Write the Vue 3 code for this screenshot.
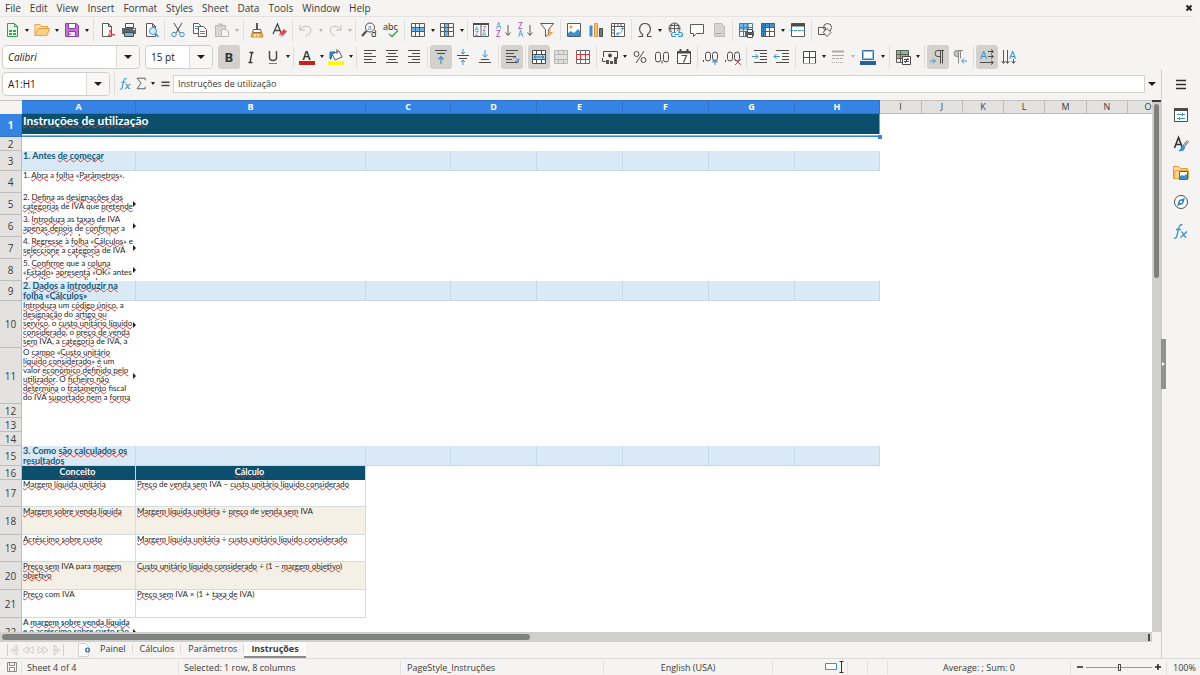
<script setup>
import { ref } from 'vue'

const menus = ['File', 'Edit', 'View', 'Insert', 'Format', 'Styles', 'Sheet', 'Data', 'Tools', 'Window', 'Help']

const page = '<path d="M3.5 1.5h6l3 3v10h-9z" fill="#fff" stroke="#5a5a58"/><path d="M9.5 1.5v3h3" fill="none" stroke="#5a5a58"/>'
const lines = (a) => a.map(([x, y, w]) => `<path d="M${x} ${y}.5h${w}" stroke="#4b4b49"/>`).join('')
const grid = (c) => `<path d="M1.5 1.5h13v13h-13zM1.5 5.5h13M1.5 9.5h13M5.5 1.5v13M9.5 1.5v13" fill="none" stroke="${c}"/>`
const letter = (x, y, s, c, t, extra = '') => `<text x="${x}" y="${y}" font-size="${s}" fill="${c}" font-family="Noto Sans, sans-serif" ${extra}>${t}</text>`
const down = '<path d="M13 3v10M10.500 10.500l2.500 3l2.500-3" fill="none" stroke="#5a5a58"/>'

const icons = {
  new: '<path d="M3.500 1.500h7l3 3v10h-10z" fill="#e9f6ec" stroke="#2f9e4e"/><path d="M10.500 1.500v3h3" fill="none" stroke="#2f9e4e"/><path d="M5 8h7v5h-7z" fill="#3aa757"/><path d="M5 10.500h7M8.500 8v5" stroke="#e9f6ec"/>',
  open: '<path d="M1 13.500v-11h5l1.500 2h6v3" fill="#fbe0ae" stroke="#e8a33d"/><path d="M1 13.500l3-7h11.500l-2.500 7z" fill="#fdd189" stroke="#e8a33d"/>',
  save: '<path d="M1.500 1.500h11l2 2v11h-13z" fill="#c073d0" stroke="#91419f"/><path d="M4.500 1.500h7v5h-7z" fill="#fff" stroke="#91419f"/><path d="M4.500 9.500h7v5h-7z" fill="#f6e8f9" stroke="#91419f"/><path d="M6 11v2" stroke="#91419f"/>',
  pdf: page + '<path d="M8 15c3-3 4-5 3-7c-1 2 2 5 5 5c-3-1-6 0-8 2" fill="none" stroke="#d9364c"/>',
  print: '<path d="M4.500 1.500h8v4h-8z" fill="#fff" stroke="#4b4b49"/><path d="M1 6h14v6h-14z" fill="#5e6467"/><path d="M3.500 10.500h9v4h-9z" fill="#6fb6e8" stroke="#4b4b49"/><path d="M12 7.500h2" stroke="#fff"/>',
  preview: page + '<circle cx="10" cy="9" r="3.500" fill="#d7ecfa" stroke="#3c92d0"/><path d="M12.500 11.500l3 3.500" stroke="#3c92d0" stroke-width="1.500"/>',
  cut: '<path d="M4 1l6 10M12 1l-6 10" stroke="#4b4b49" fill="none"/><circle cx="4" cy="12.500" r="2.200" fill="none" stroke="#3c92d0"/><circle cx="12" cy="12.500" r="2.200" fill="none" stroke="#3c92d0"/>',
  copy: '<path d="M1.500 1.500h5l3 3v7h-8z" fill="#fff" stroke="#5a5a58"/><path d="M6.500 4.500h5l3 3v7h-8z" fill="#fff" stroke="#5a5a58"/><path d="M3 4.500h3M3 6.500h3M8 9.500h5M8 11.500h5" stroke="#3c92d0"/>',
  paste: '<path d="M1.500 3.500h10v11h-10z" fill="#d8d8d6" stroke="#b8b8b6"/><path d="M4 1.500h5v3h-5z" fill="#c4c4c2"/><path d="M7.500 7.500h4l3 2v5h-7z" fill="#f5f5f4" stroke="#b8b8b6"/>',
  brush: '<path d="M8 1v6" stroke="#5a5a58" stroke-width="2"/><path d="M4.500 7.500h7l1 3h-9z" fill="#fff" stroke="#5a5a58"/><path d="M3 11h10l1 4h-12z" fill="#f2b255" stroke="#d88a1e"/><path d="M6 12v3M9 12v3" stroke="#fff"/>',
  clear: '<path d="M2 12l4.500-10l4 10M3.500 8.500h6" fill="none" stroke="#4b4b49" stroke-width="1.300"/><path d="M8 12l5-5l3 2.500l-5 5z" fill="#e64553"/><path d="M8 12l3 2.500" stroke="#f6a9b0" stroke-width="2"/>',
  undo: '<path d="M2 8c3-5 10-5 11 0c0 3-3 5-5 6M2 3v5h5" fill="none" stroke="#bdbdbb"/>',
  redo: '<path d="M14 8c-3-5-10-5-11 0c0 3 3 5 5 6M14 3v5h-5" fill="none" stroke="#bdbdbb"/>',
  find: '<circle cx="9" cy="5.500" r="4.500" fill="#fff" stroke="#4b4b49"/><path d="M5.500 9l-4.500 5" stroke="#4b4b49" stroke-width="2"/>' + letter(6.5, 8, 7.5, '#3c92d0', 'a') + letter(10, 15, 9, '#333', 'd'),
  spell: letter(0, 8, 9, '#333', 'abc') + '<path d="M6 12l3 2.500l6-6" fill="none" stroke="#3aa757" stroke-width="1.500"/>',
  row: '<path d="M1 5h14v4h-14z" fill="#6db5ea"/>' + grid('#5a5a58'),
  col: '<path d="M5 1h5v13h-5z" fill="#6db5ea"/>' + grid('#5a5a58'),
  sort: '<path d="M.500 1.500h15v13h-15zM8 1.500v13" fill="#fff" stroke="#5a5a58"/><path d="M0 2h16" stroke="#4b4b49" stroke-width="2"/>' + letter(1.5, 8.5, 6.5, '#3c92d0', 'A') + letter(9.5, 8.5, 6.5, '#a347ba', 'Z') + letter(2, 14, 6.5, '#a347ba', 'Z') + letter(9, 14, 6.5, '#3c92d0', 'A'),
  az: letter(1, 7, 8, '#3c92d0', 'A') + letter(1, 15, 8, '#a347ba', 'Z') + down,
  za: letter(1, 7, 8, '#a347ba', 'Z') + letter(1, 15, 8, '#3c92d0', 'A') + down,
  filter: '<path d="M1.500 1.500h13l-5 6v5l-3 2v-7z" fill="#fff" stroke="#5a5a58"/><path d="M12 6l-4 5h3l-2 5l5-6h-3z" fill="#f39a37"/>',
  image: '<path d="M1.500 1.500h13v13h-13z" fill="#fff" stroke="#5a5a58"/><path d="M2 14v-3l3-2l3 2l4-4l2.500 3v4z" fill="#3c92d0"/><circle cx="5" cy="5" r="1.500" fill="#f39a37"/>',
  chart: '<path d="M1.500 3.500h3v11h-3z" fill="#3c92d0"/><path d="M6.500 1.500h3v13h-3z" fill="#f8c078" stroke="#e8952f"/><path d="M11.500 6.500h3v8h-3z" fill="#777" stroke="#4b4b49"/>',
  pivot: '<path d="M1.500 1.500h13v13h-13z" fill="#fff" stroke="#5a5a58"/><path d="M1.500 4.500h13M4.500 1.500v13M8 1.500v3M11 1.500v3M1.500 8h3M1.500 11h3" stroke="#5a5a58"/><path d="M6.500 12c4 0 6-2 6-6M10.500 7.500l2-2l2 2M8.500 10l-2 2l2 2" fill="none" stroke="#3c92d0"/>',
  omega: '<path d="M1.500 14.500h4v-2c-5-4-3-11 2.500-11s7.500 7 2.500 11v2h4" fill="none" stroke="#4b4b49" stroke-width="1.200"/>',
  link: '<circle cx="7.500" cy="6.500" r="5.500" fill="none" stroke="#5a5a58"/><path d="M2 6.500h11M3 3.500h9M7.500 1v11M5 2c-2 3-2 6 0 9M10 2c2 3 2 5 0 7" fill="none" stroke="#5a5a58"/><path d="M4 10h12v6h-12z" fill="#f5f5f4"/><path d="M9 10.500h-2.500a2 2 0 0 0 0 4h2.500M11 10.500h2.500a2 2 0 0 1 0 4h-2.500M7.500 12.500h5" fill="none" stroke="#3c92d0" stroke-width="1.200"/>',
  comment: '<path d="M1.500 2.500h13v9h-7l-3 3v-3h-3z" fill="#fff" stroke="#5a5a58"/>',
  footer: '<path d="M3.500 1.500h7l3 3v10h-10z" fill="#d5d5d3" stroke="#bbbbb9"/><path d="M5 11.500h6" stroke="#aaa"/>',
  printarea: '<path d="M2 1h9v7h-9z" fill="#6db5ea"/>' + grid('#5a7890') + '<path d="M7 9h9v5h-9z" fill="#5e6467"/><path d="M9.500 7.500h5v3h-5zM9.500 12.500h5v3h-5z" fill="#fff" stroke="#4b4b49"/>',
  freeze: '<path d="M1 1h14v14h-14z" fill="#fff"/><path d="M1 1h14v4h-14zM1 1h4v14h-4z" fill="#3c92d0"/>' + grid('#5a5a58') + '<path d="M1 3h5M3.500 1v14" stroke="#1f6cab"/>',
  split: '<path d="M1.500 1.500h13v13h-13z" fill="#fff" stroke="#5a5a58"/><path d="M1 3h14" stroke="#4b4b49" stroke-width="3"/><path d="M0 8.500h16" stroke="#3c92d0" stroke-dasharray="3 1"/>',
  shapes: '<path d="M1.500 5.500h7v7h-7z" fill="#f5f5f4" stroke="#5a5a58"/><circle cx="10.500" cy="5.500" r="4" fill="none" stroke="#5a5a58"/><path d="M10 6.500l4 4l-4 4l-4-4z" fill="#f5f5f4" stroke="#5a5a58"/>',
  bold: letter(3.5, 13, 13, '#333', 'B', 'font-weight="700"'),
  italic: '<path d="M6.500 3.500h4M5.500 13.500h4M9 3.500l-2 10" fill="none" stroke="#333" stroke-width="1.300"/>',
  underline: '<path d="M4.500 2v6.500c0 4 7 4 7 0v-6.500" fill="none" stroke="#4b4b49" stroke-width="1.500"/><path d="M4 14.500h8" stroke="#3c92d0"/>',
  color: letter(3.5, 11, 12, '#333', 'A', 'font-weight="600"') + '<path d="M0 12h16v4h-16z" fill="#c9211e"/>',
  fill: '<path d="M4 5l7-3l3 6l-7 3z" fill="#fff" stroke="#5a5a58"/><path d="M9 0v5" stroke="#5a5a58"/><path d="M2 3h5l-3 2l-1 5h-1z" fill="#3c92d0" stroke="#2a6da8"/><path d="M0 12h16v4h-16z" fill="#ff0"/>',
  left: lines([[2, 1, 12], [2, 4, 8], [2, 7, 12], [2, 10, 8], [2, 13, 12]]),
  center: lines([[2, 1, 12], [4, 4, 8], [2, 7, 12], [4, 10, 8], [2, 13, 12]]),
  right: lines([[2, 1, 12], [6, 4, 8], [2, 7, 12], [6, 10, 8], [2, 13, 12]]),
  top: lines([[2, 1, 12], [4, 4, 8]]) + '<path d="M8 15v-7M5.500 10.500l2.500-3l2.500 3" fill="none" stroke="#3c92d0" stroke-width="1.200"/>',
  middle: lines([[2, 6, 12], [4, 9, 8]]) + '<path d="M8 0v5M6 3l2 2l2-2M8 16v-5M6 13l2-2l2 2" fill="none" stroke="#3c92d0"/>',
  bottom: lines([[4, 10, 8], [2, 13, 12]]) + '<path d="M8 1v7M5.500 5.500l2.500 3l2.500-3" fill="none" stroke="#3c92d0"/>',
  wrap: lines([[2, 1, 12], [2, 4, 8], [2, 7, 10], [2, 10, 6], [2, 13, 12]]) + '<path d="M9 9c3-1 4 0 5 4M11 11.500l3 2l1-4" fill="none" stroke="#3c92d0"/>',
  merge: '<path d="M1.500 1.500h13v13h-13zM1.500 5.500h13M1.500 10.500h13M5.500 1.500v4M10.500 1.500v4M5.500 10.500v4M10.500 10.500v4" fill="#fff" stroke="#4b4b49"/><path d="M2 6h12v4h-12z" fill="#a8d3f2"/><path d="M3 8h10M5 6.500l-2 1.500l2 1.500M11 6.500l2 1.500l-2 1.500" fill="none" stroke="#2a7ab8"/>',
  mergec: '<path d="M1.500 1.500h13v13h-13zM1.500 5.500h13M1.500 10.500h13M5.500 1.500v4M10.500 1.500v4M5.500 10.500v4M10.500 10.500v4" fill="#e0e0de" stroke="#b5b5b3"/>',
  unmerge: '<path d="M1.500 1.500h13v13h-13zM1.500 5.500h13M1.500 10.500h13M5.500 1.500v4M10.500 1.500v4M5.500 10.500v4M10.500 10.500v4" fill="#fff" stroke="#6a6a68"/><path d="M1.500 5.500h13v5h-13zM5.500 5.500v5M10.500 5.500v5" fill="#fee" stroke="#d9363e"/>',
  currency: '<path d="M1.500 8v-5.500h14v7" fill="none" stroke="#4b4b49"/><path d="M.500 9v3.500h3" fill="none" stroke="#4b4b49"/><circle cx="8" cy="6.500" r="2" fill="#4b4b49"/><path d="M4 11h3v4h-3zM8 12h3v3h-3zM12 8h3v7h-3z" fill="#555"/>',
  percent: '<circle cx="4.500" cy="5" r="2.500" fill="none" stroke="#4b4b49"/><circle cx="11.500" cy="11" r="2.500" fill="none" stroke="#4b4b49"/><path d="M12 2l-8 12" stroke="#4b4b49"/>',
  number: '<rect x="1.500" y="3" width="5" height="10" rx="2.500" fill="none" stroke="#4b4b49"/><rect x="9.500" y="3" width="5" height="10" rx="2.500" fill="none" stroke="#4b4b49"/><path d="M8 11.500v3" stroke="#4b4b49"/>',
  date: '<path d="M1.500 2.500h13v12h-13z" fill="#fff" stroke="#4b4b49"/><path d="M1 3.500h14M4.500 0v3M11.500 0v3" stroke="#4b4b49" stroke-width="2"/><path d="M5.500 6.500h5l-3 7" fill="none" stroke="#4b4b49" stroke-width="1.200"/>',
  addd: '<rect x="2.500" y="3" width="5" height="9" rx="2.500" fill="none" stroke="#4b4b49"/><rect x="9.500" y="3" width="5" height="9" rx="2.500" fill="none" stroke="#4b4b49"/><path d="M.500 11v2" stroke="#4b4b49"/><path d="M9 13h6M12 10v6" stroke="#3c92d0"/>',
  deld: '<rect x="2.500" y="3" width="5" height="9" rx="2.500" fill="none" stroke="#4b4b49"/><rect x="9.500" y="3" width="5" height="9" rx="2.500" fill="none" stroke="#4b4b49"/><path d="M.500 11v2" stroke="#4b4b49"/><path d="M10 10l6 6M16 10l-6 6" stroke="#e64553"/>',
  indent: lines([[2, 1, 13], [8, 4, 7], [8, 7, 7], [8, 10, 7], [2, 13, 13]]) + '<path d="M0 7.500h6M3.500 5l2.500 2.500l-2.500 2.500" fill="none" stroke="#3c92d0"/>',
  outdent: lines([[2, 1, 13], [8, 4, 7], [8, 7, 7], [8, 10, 7], [2, 13, 13]]) + '<path d="M6 7.500h-6M2.500 5l-2.500 2.500l2.500 2.500" fill="none" stroke="#3c92d0"/>',
  borders: '<path d="M2.500 2.500h12v12h-12zM8.500 2.500v12M2.500 8.500h12" fill="#fff" stroke="#4b4b49"/><path d="M2 14.500h13" stroke="#e8a33d"/>',
  bstyle: '<path d="M2 2.500h12" stroke="#aaa" stroke-width="2"/><path d="M2 6.500h12" stroke="#aaa"/><path d="M2 9.500h12" stroke="#aaa" stroke-dasharray="3 1"/><path d="M2 13.500h12" stroke="#aaa" stroke-dasharray="1 1"/>',
  bcolor: '<path d="M2.500 1.500h11v9h-11z" fill="#fff" stroke="#3c6c9c"/><path d="M3.500 2.500h9v7h-9z" fill="none" stroke="#8ec3ec"/><path d="M0 12h16v4h-16z" fill="#2a6099"/>',
  cond: '<path d="M1 1h12v4h-12z" fill="#7cc68d"/><path d="M1 5h12v4h-12z" fill="#ef8a80"/><path d="M1.500 1.500h12v12h-12zM1.500 5.500h12M1.500 9.500h12M5.500 1.500v12" fill="none" stroke="#5a5a58"/><path d="M7.500 7.500h8v8h-8z" fill="#fff" stroke="#4b4b49"/><path d="M9 10.500h5M9 12.500h5M13 9l-3 5" stroke="#4b4b49"/>',
  ltr: '<path d="M14 1.500h-6a3 3 0 0 0 0 6h2M10.500 1.500v13M12.500 1.500v13" fill="none" stroke="#4b4b49"/><path d="M0 12h5M3 9.500l2.500 2.500l-2.500 2.500" fill="none" stroke="#3c92d0"/>',
  rtl: '<path d="M8 1.500h-3a3 3 0 0 0 0 6h1" fill="#c4c4c2" stroke="#8a8a88"/><path d="M6.500 1.500v13M8.500 1.500v8M6 1.500h5" fill="none" stroke="#8a8a88"/><path d="M15 12h-5M12 9.500l-2.500 2.500l2.500 2.500" fill="none" stroke="#3c92d0"/>',
  horiz: letter(1, 10, 11, '#3c92d0', 'A') + '<path d="M9 2.500h5M12 .500l2.500 2l-2.500 2M9 7.500h5M12 5.500l2.500 2l-2.500 2M1 13.500h13M12 11.500l2.500 2l-2.500 2" fill="none" stroke="#4b4b49"/>',
  vert: letter(8, 10, 11, '#3c92d0', 'A') + '<path d="M2.500 1v13M.500 12l2 2.500l2-2.500M6.500 1v13M4.500 12l2 2.500l2-2.500M12.500 10v4M10.500 12l2 2.500l2-2.500" fill="none" stroke="#5a5a58"/>',
  props: '<path d="M1.500 1.500h13v13h-13z" fill="#fff" stroke="#4b4b49"/><path d="M1 2.500h14" stroke="#4b4b49" stroke-width="3"/><path d="M4 7.500h8M4 11.500h8M9.500 6v3M6.500 10v3" stroke="#3c92d0"/>',
  styles: '<path d="M1.500 12l4-10.500l4 10.500M3 8.500h5" fill="none" stroke="#333" stroke-width="1.600"/><path d="M15 5l-5 6" stroke="#5a5a58" stroke-width="2.500"/><path d="M15 5l-5 6" stroke="#fff"/><path d="M10 10c-3 0-2 4-5 5c5 1 7-1 7-4z" fill="#3c92d0"/>',
  gallery: '<path d="M.500 13.500v-12h5l2 2h7v3" fill="#fbe0ae" stroke="#e8952f"/><path d="M1 13.500l1-8h13.500v8z" fill="#fdd189" stroke="#e8a33d"/><path d="M6.500 6.500h8v8h-8z" fill="#fff" stroke="#44698a"/><path d="M7 14v-3l2-1l2 1l2-2l1 1v4z" fill="#3c92d0"/>',
  navigator: '<circle cx="8" cy="8" r="6.500" fill="#fff" stroke="#4b4b49"/><path d="M12 4l-2 6l-6 2l2-6z" fill="#2f86c8"/><circle cx="8" cy="8" r="1.200" fill="#fff"/>',
  fx: '<path d="M1 15c3 1 3-3 4-7c1-5 2-7 4.500-6M3 6.500h5" fill="none" stroke="#3c92d0" stroke-width="1.300"/><path d="M8 9c3-1 2 6 5.500 5M14 8.500l-6.500 6" fill="none" stroke="#3c92d0" stroke-width="1.300"/>',
  sum: '<path d="M12.500 4v-2.500h-10l5 6l-5 7h10v-2.500" fill="none" stroke="#5a5a58" stroke-width="1.200"/>',
  equals: '<path d="M3 6.500h10M3 10.500h10" stroke="#4b4b49" stroke-width="2"/>',
  menu: '<path d="M3 4.500h10M3 8.500h10M3 12.500h10" stroke="#2e2e2e" stroke-width="1.500"/>',
}

const sep = { sep: true }
const b = (icon, label, opt = {}) => ({ icon, label, ...opt })
const standard = [
  b('new', 'New', { arrow: 'wide' }), b('open', 'Open', { arrow: 'wide' }), b('save', 'Save', { arrow: 'wide' }), sep,
  b('pdf', 'Export as PDF'), b('print', 'Print'), b('preview', 'Print Preview'), sep,
  b('cut', 'Cut'), b('copy', 'Copy'), b('paste', 'Paste', { arrow: 'wide', off: true }), sep,
  b('brush', 'Clone Formatting'), b('clear', 'Clear Formatting'), sep,
  b('undo', 'Undo', { arrow: 'slim', off: true }), b('redo', 'Redo', { arrow: 'slim', off: true }), sep,
  b('find', 'Find and Replace'), b('spell', 'Spelling'), sep,
  b('row', 'Row', { arrow: 'slim' }), b('col', 'Column', { arrow: 'slim' }), sep,
  b('sort', 'Sort'), b('az', 'Sort Ascending'), b('za', 'Sort Descending'), b('filter', 'AutoFilter'), sep,
  b('image', 'Insert Image'), b('chart', 'Insert Chart'), b('pivot', 'Pivot Table'), sep,
  b('omega', 'Special Character', { arrow: 'wide' }), b('link', 'Hyperlink'), b('comment', 'Comment'), b('footer', 'Headers and Footers', { off: true }), sep,
  b('printarea', 'Print Area'), b('freeze', 'Freeze Rows and Columns', { arrow: 'wide' }), b('split', 'Split Window'), sep,
  b('shapes', 'Show Draw Functions'),
]
const formatting = [
  b('bold', 'Bold', { on: true }), b('italic', 'Italic'), b('underline', 'Underline', { arrow: 'slim' }), sep,
  b('color', 'Font Color', { arrow: 'slim' }), b('fill', 'Background Color', { arrow: 'slim' }), sep,
  b('left', 'Align Left'), b('center', 'Align Center'), b('right', 'Align Right'), sep,
  b('top', 'Align Top', { on: true }), b('middle', 'Center Vertically'), b('bottom', 'Align Bottom'), sep,
  b('wrap', 'Wrap Text', { on: true }), sep,
  b('merge', 'Merge and Center', { on: true }), b('mergec', 'Merge Cells', { off: true }), b('unmerge', 'Unmerge Cells'), sep,
  b('currency', 'Format as Currency', { arrow: 'wide' }), b('percent', 'Format as Percent'), b('number', 'Format as Number'), b('date', 'Format as Date'), sep,
  b('addd', 'Add Decimal Place'), b('deld', 'Delete Decimal Place'), sep,
  b('indent', 'Increase Indent'), b('outdent', 'Decrease Indent'), sep,
  b('borders', 'Borders', { arrow: 'slim' }), b('bstyle', 'Border Style', { arrow: 'wide', off: true }), b('bcolor', 'Border Color', { arrow: 'wide' }), sep,
  b('cond', 'Conditional Formatting', { arrow: 'wide' }), sep,
  b('ltr', 'Left-To-Right', { on: true }), b('rtl', 'Right-To-Left'), sep,
  b('horiz', 'Text direction from left to right', { on: true }), b('vert', 'Text direction from top to bottom'),
]
const sidebar = [b('menu', 'Sidebar Settings'), b('props', 'Properties'), b('styles', 'Styles'), b('gallery', 'Gallery'), b('navigator', 'Navigator'), b('fx', 'Functions')]

const columns = [
  ['A', 114], ['B', 230], ['C', 85], ['D', 86], ['E', 86], ['F', 86], ['G', 86], ['H', 85],
  ['I', 42], ['J', 41], ['K', 41], ['L', 41], ['M', 42], ['N', 41], ['O', 41],
].map(([name, width], i) => ({ name, width, selected: i < 8 }))
const tableWidth = 22 + columns.reduce((sum, c) => sum + c.width, 0)

// Words between asterisks carry the spell-check underline.
const rows = [
  { n: 1, h: 23, kind: 'title', a: ['*Instruções de utilização*'] },
  { n: 2, h: 14 },
  { n: 3, h: 20, kind: 'section', a: ['1. Antes *de começar*'] },
  { n: 4, h: 22, a: ['1. *Abra* a *folha* «*Parâmetros*».'] },
  { n: 5, h: 22, more: true, a: ['2. *Defina* as *designações das*', '*categorias* de IVA que *pretende*', '*utilizar*.'] },
  { n: 6, h: 22, more: true, a: ['3. *Introduza* as *taxas* de IVA', '*apenas depois* de *confirmar* a', '*sua aplicabilidade na fonte*'] },
  { n: 7, h: 22, more: true, a: ['4. *Regresse* à *folha* «*Cálculos*» e', '*seleccione* a *categoria* de IVA', '*adequada* a *cada linha*.'] },
  { n: 8, h: 22, more: true, a: ['5. *Confirme* que a *coluna*', '«*Estado*» *apresenta* «OK» antes', '*de utilizar os resultados*.'] },
  { n: 9, h: 20, kind: 'section', a: ['2. *Dados* a *introduzir na*', '*folha* «*Cálculos*»'] },
  { n: 10, h: 47, more: true, a: ['*Introduza* um *código único*, a', '*designação* do *artigo ou*', '*serviço*, o *custo unitário líquido*', '*considerado*, o *preço de venda*', '*sem* IVA, a *categoria* de IVA, a'] },
  { n: 11, h: 56, more: true, a: ['O *campo* «*Custo unitário*', '*líquido considerado*» *é* um', 'valor *económico definido pelo*', '*utilizador*. O *ficheiro não*', '*determina* o *tratamento* fiscal', 'do IVA *suportado nem* a *forma*'] },
  { n: 12, h: 14 },
  { n: 13, h: 14 },
  { n: 14, h: 14 },
  { n: 15, h: 20, kind: 'section', a: ['3. Como *são calculados os*', '*resultados*'] },
  { n: 16, h: 14, kind: 'head', a: ['*Conceito*'], b: ['*Cálculo*'] },
  { n: 17, h: 27, kind: 'body', a: ['*Margem líquida unitária*'], b: ['*Preço* de *venda sem* IVA − *custo unitário líquido considerado*'] },
  { n: 18, h: 28, kind: 'body alt', a: ['*Margem sobre venda líquida*'], b: ['*Margem líquida unitária* ÷ *preço* de *venda sem* IVA'] },
  { n: 19, h: 27, kind: 'body', a: ['*Acréscimo sobre custo*'], b: ['*Margem líquida unitária* ÷ *custo unitário líquido considerado*'] },
  { n: 20, h: 28, kind: 'body alt', a: ['*Preço sem* IVA para *margem*', '*objetivo*'], b: ['*Custo unitário líquido considerado* ÷ (1 − *margem objetivo*)'] },
  { n: 21, h: 28, kind: 'body', a: ['*Preço* com IVA'], b: ['*Preço sem* IVA × (1 + *taxa de* IVA)'] },
  { n: 22, h: 28, kind: 'note', more: true, a: ['A *margem sobre venda líquida*', '*e o acréscimo sobre custo são*'] },
]
const parts = (line) => line.split('*').map((text, i) => ({ text, wrong: i % 2 === 1 })).filter((p) => p.text)
const spare = (row) => (row.kind === 'title' ? columns.slice(8) : columns.slice(2))

const sheets = ['Painel', 'Cálculos', 'Parâmetros', 'Instruções']
const activeSheet = ref('Instruções')
const fontName = ref('Calibri')
const fontSize = ref('15 pt')
const cellRef = ref('A1:H1')
const formula = ref('Instruções de utilização')
const zoom = ref(50)
</script>

<template>
  <div class="app">
    <nav class="menubar" aria-label="Menu">
      <button v-for="m in menus" :key="m" type="button">{{ m }}</button>
      <button type="button" class="close" aria-label="Close document">
        <svg viewBox="0 0 8 8" width="8" height="8"><path d="M1.500 1.500l5 5M6.500 1.500l-5 5" stroke="#222" stroke-width="2" /></svg>
      </button>
    </nav>

    <div class="toolbar" role="toolbar" aria-label="Standard">
      <template v-for="(t, i) in standard" :key="i">
        <span v-if="t.sep" class="sep"></span>
        <template v-else>
          <button type="button" class="tool" :class="{ on: t.on }" :disabled="t.off" :aria-label="t.label"><svg viewBox="0 0 16 16" v-html="icons[t.icon]"></svg></button>
          <button v-if="t.arrow" type="button" class="drop" :class="t.arrow" :disabled="t.off" :aria-label="t.label + ' options'"></button>
        </template>
      </template>
    </div>

    <div class="toolbar" role="toolbar" aria-label="Formatting">
      <div class="combo font">
        <input v-model="fontName" aria-label="Font Name" />
        <button type="button" aria-label="Font list"></button>
      </div>
      <div class="combo size">
        <input v-model="fontSize" aria-label="Font Size" />
        <button type="button" aria-label="Size list"></button>
      </div>
      <template v-for="(t, i) in formatting" :key="i">
        <span v-if="t.sep" class="sep"></span>
        <template v-else>
          <button type="button" class="tool" :class="{ on: t.on }" :disabled="t.off" :aria-label="t.label"><svg viewBox="0 0 16 16" v-html="icons[t.icon]"></svg></button>
          <button v-if="t.arrow" type="button" class="drop" :class="t.arrow" :disabled="t.off" :aria-label="t.label + ' options'"></button>
        </template>
      </template>
    </div>

    <div class="middle">
      <main class="document">
        <div class="formulabar">
          <div class="combo name">
            <input v-model="cellRef" aria-label="Name Box" />
            <button type="button" aria-label="Named ranges"></button>
          </div>
          <span class="sep"></span>
          <button type="button" class="mini" aria-label="Function Wizard"><svg viewBox="0 0 16 16" v-html="icons.fx"></svg></button>
          <button type="button" class="mini" aria-label="Select Function"><svg viewBox="0 0 16 16" v-html="icons.sum"></svg></button>
          <button type="button" class="drop wide" aria-label="Function list"></button>
          <button type="button" class="mini" aria-label="Formula"><svg viewBox="0 0 16 16" v-html="icons.equals"></svg></button>
          <input v-model="formula" class="formula" aria-label="Input line" />
          <button type="button" class="expand" aria-label="Expand Formula Bar"></button>
        </div>

        <div class="sheetarea">
          <div class="viewport">
            <table :style="{ width: tableWidth + 'px' }">
              <colgroup>
                <col class="rowhead" />
                <col v-for="c in columns" :key="c.name" :style="{ width: c.width + 'px' }" />
              </colgroup>
              <thead>
                <tr>
                  <td class="corner"></td>
                  <th v-for="c in columns" :key="c.name" scope="col" :class="{ selected: c.selected }">{{ c.name }}</th>
                </tr>
              </thead>
              <tbody>
                <tr v-for="r in rows" :key="r.n" :class="r.kind" :style="{ height: r.h + 'px' }">
                  <th scope="row" :class="{ selected: r.n === 1 }">{{ r.n }}</th>
                  <td class="cell" :colspan="r.kind === 'title' ? 8 : 1">
                    <div class="content" :style="{ height: r.h - 1 + 'px' }">
                      <span v-for="(l, i) in r.a" :key="i" class="line"><span v-for="(p, j) in parts(l)" :key="j" :class="{ wrong: p.wrong }">{{ p.text }}</span></span>
                    </div>
                    <i v-if="r.more" class="more"></i>
                    <i v-if="r.kind === 'title'" class="handle"></i>
                  </td>
                  <td v-if="r.kind !== 'title'" class="cell">
                    <div class="content" :style="{ height: r.h - 1 + 'px' }">
                      <span v-for="(l, i) in r.b" :key="i" class="line"><span v-for="(p, j) in parts(l)" :key="j" :class="{ wrong: p.wrong }">{{ p.text }}</span></span>
                    </div>
                  </td>
                  <td v-for="c in spare(r)" :key="c.name" :class="{ band: c.selected }"></td>
                </tr>
              </tbody>
            </table>
          </div>
          <div class="vscroll"><span></span></div>
        </div>
        <div class="hscroll"><span class="thumb"></span><span class="grip"></span></div>

        <div class="tabs">
          <div class="tabnav">
            <button type="button" aria-label="First sheet"><svg viewBox="0 0 14 14"><path d="M1.500 1v12M11 2l-6 5l6 5v-3l-3-2l3-2zM7 7h6" /></svg></button>
            <button type="button" aria-label="Previous sheet"><svg viewBox="0 0 14 14"><path d="M7 3.500l-5 3.500l5 3.500zM12 3.500l-5 3.500l5 3.500z" /></svg></button>
            <button type="button" aria-label="Next sheet"><svg viewBox="0 0 14 14"><path d="M2 3.500l5 3.500l-5 3.500zM7 3.500l5 3.500l-5 3.500z" /></svg></button>
            <button type="button" aria-label="Last sheet"><svg viewBox="0 0 14 14"><path d="M12.500 1v12M3 2l6 5l-6 5v-3l3-2l-3-2zM7 7h-6" /></svg></button>
          </div>
          <button type="button" class="add" aria-label="Add sheet"><svg viewBox="0 0 14 14"><path d="M1.500 .500h7l3 3v10h-10z" fill="#fff" stroke="#d2d2d0" /><circle cx="10.500" cy="7" r="2.500" fill="#2a63b0" /><path d="M9 7h3M10.500 5.500v3" stroke="#fff" /></svg></button>
          <button v-for="s in sheets" :key="s" type="button" class="tab" :class="{ active: s === activeSheet }" @click="activeSheet = s">{{ s }}</button>
        </div>
      </main>

      <aside class="sidebar">
        <button v-for="s in sidebar" :key="s.icon" type="button" :aria-label="s.label" :class="s.icon"><svg viewBox="0 0 16 16" v-html="icons[s.icon]"></svg></button>
        <button type="button" class="hide" aria-label="Hide Sidebar"></button>
      </aside>
    </div>

    <footer class="status">
      <span class="disk"><svg viewBox="0 0 12 12"><path d="M1.500 1.500h9v9h-9zM3.500 1.500v3h5v-3M3.500 10.500v-4h5v4" fill="none" stroke="#8a8a88" /></svg></span>
      <span class="count">Sheet 4 of 4</span>
      <span class="selection">Selected: 1 row, 8 columns</span>
      <span class="pagestyle">PageStyle_Instruções</span>
      <span class="language">English (USA)</span>
      <span class="mode"><svg viewBox="0 0 20 12"><path d="M1.500 2.500h11v6h-11z" fill="#fff" stroke="#3c92d0" /><path d="M17.500 1v10M15.500 .500h4M15.500 11.500h4" stroke="#333" /></svg></span>
      <span class="blank"></span>
      <span class="blank"></span>
      <span class="sums">Average: ; Sum: 0</span>
      <span class="zoomer">
        <button type="button" aria-label="Zoom Out"><svg viewBox="0 0 8 8"><path d="M1 4h6" stroke="#222" stroke-width="1.500" /></svg></button>
        <input v-model="zoom" type="range" min="0" max="100" aria-label="Zoom" />
        <button type="button" aria-label="Zoom In"><svg viewBox="0 0 8 8"><path d="M1 4h6M4 1v6" stroke="#222" stroke-width="1.500" /></svg></button>
      </span>
      <span class="percent">100%</span>
    </footer>
  </div>
</template>

<style>
body {
  margin: 0;
  overflow: hidden;
}
svg {
  overflow: visible;
}
</style>

<style scoped>
.app {
  display: flex;
  flex-direction: column;
  height: 100vh;
  background: #f5f4f2;
  color: #3a3a38;
  font-family: "Open Sans", "Noto Sans", sans-serif;
  font-size: 10px;
}
button,
input {
  margin: 0;
  padding: 0;
  border: 0;
  background: none;
  color: inherit;
  font: inherit;
  box-sizing: border-box;
  min-width: 0;
}
svg {
  display: block;
}

.menubar {
  display: flex;
  align-items: center;
  box-sizing: border-box;
  height: 17px;
  margin-right: 7px;
  padding-left: 1px;
  border-bottom: 1px solid #e4e3e1;
  flex: none;
}
.menubar button {
  padding: 0 5px 0 4px;
  line-height: 16px;
}
.menubar .close {
  margin-left: auto;
  padding: 0;
}

.toolbar {
  display: flex;
  align-items: center;
  height: 26px;
  padding-left: 1px;
  flex: none;
}
.toolbar + .toolbar {
  height: 27px;
}
.tool {
  width: 22px;
  height: 24px;
  border-radius: 3px;
  display: grid;
  place-items: center;
  flex: none;
}
.tool.on {
  background: #d4d1cd;
}
.tool svg {
  width: 16px;
  height: 16px;
}
.drop {
  width: 8px;
  height: 24px;
  display: grid;
  place-items: center;
  flex: none;
}
.drop.slim {
  width: 7px;
}
.drop::after,
.combo button::after,
.expand::after {
  content: "";
  border: 2px solid transparent;
  border-top: 3px solid #1e1e1e;
  border-bottom: 0;
}
.drop:disabled::after {
  border-top-color: #b5b5b3;
}
.sep {
  width: 1px;
  height: 22px;
  margin: 0 2px;
  background: #e0dfdd;
  flex: none;
}
.combo {
  display: flex;
  box-sizing: border-box;
  height: 24px;
  border: 1px solid #d0cecb;
  border-radius: 4px;
  background: #fff;
  overflow: hidden;
  flex: none;
}
.combo input {
  flex: 1;
  padding-left: 5px;
  outline: 0;
  color: #222;
}
.combo button {
  width: 23px;
  border-left: 1px solid #dddbd8;
  background: #f8f7f6;
  display: grid;
  place-items: center;
}
.combo button::after,
.expand::after {
  border-width: 4px 4px 0;
}
.combo.font {
  width: 138px;
  margin: 0 5px 0 1px;
}
.combo.font input {
  font-style: italic;
}
.combo.size {
  width: 68px;
  margin-right: 5px;
}

.middle {
  display: flex;
  flex: 1;
  min-height: 0;
}
.document {
  flex: 1;
  min-width: 0;
  display: flex;
  flex-direction: column;
  border-right: 1px solid #cfcecc;
}
.formulabar {
  display: flex;
  align-items: center;
  height: 27px;
  padding: 0 2px;
  margin-bottom: 3px;
  flex: none;
  font-size: 9px;
}
.combo.name {
  width: 108px;
  margin-right: 2px;
  font-size: 10px;
}
.mini {
  width: 16px;
  height: 20px;
  display: grid;
  place-items: center;
  flex: none;
}
.mini svg {
  width: 13px;
  height: 13px;
}
.formula {
  flex: 1;
  height: 18px;
  padding-left: 4px;
  border: 1px solid #d4d2cf;
  background: #fff;
  outline: 0;
}
.expand {
  width: 14px;
  display: grid;
  place-items: center;
}

.sheetarea {
  display: flex;
  flex: 1;
  min-height: 0;
}
.viewport {
  flex: 1;
  min-width: 0;
  overflow: hidden;
  background: #fff;
}
table {
  table-layout: fixed;
  border-collapse: separate;
  border-spacing: 0;
}
.rowhead {
  width: 22px;
}
td,
th {
  padding: 0;
  box-sizing: border-box;
}
th {
  background: #e3e2e1;
  font-weight: 400;
  line-height: 12px;
}
thead tr {
  height: 14px;
}
thead th,
.corner {
  border-top: 1px solid #c4c3c1;
}
thead th {
  border-right: 1px solid #bebdbb;
  border-bottom: 1px solid #bebdbb;
  font-size: 9px;
}
.corner {
  background: #f5f4f2;
}
tbody th {
  border-right: 1px solid #bebdbb;
  border-bottom: 1px solid #bebdbb;
}
th.selected {
  background: #3584e4;
  border-color: #2f74ca;
  color: #fff;
  font-weight: 700;
}
.cell {
  position: relative;
  vertical-align: top;
  font-family: Lato, "Noto Sans", sans-serif;
  font-size: 8px;
  line-height: 9px;
  color: #262626;
}
.content {
  box-sizing: border-box;
  margin-right: 3px;
  padding: 0 0 0 1px;
  overflow: hidden;
}
.line {
  display: block;
  white-space: pre;
}
.wrong {
  text-decoration: underline wavy #dc3a3a 1px;
  text-decoration-skip-ink: none;
  text-underline-offset: -1px;
}
.title .cell {
  background: #0b4f6c;
  color: #fff;
  font-size: 12px;
  line-height: 14px;
  font-weight: 700;
  box-shadow: inset 0 -1px #3584e4, inset 0 -2px #8ab8f0, inset 0 -3px #fff, inset -1px 0 #62a0ea;
}
.handle {
  position: absolute;
  right: -2px;
  bottom: -2px;
  width: 4px;
  height: 4px;
  background: #3584e4;
}
.section .cell,
.section .band {
  background: #d9e9f6;
  border: solid #c5d8e6;
  border-width: 0 1px 1px 0;
}
.section .cell {
  color: #14587a;
  font-size: 9px;
  line-height: 10px;
  font-weight: 700;
}
.head .cell {
  background: #0b4f6c;
  color: #fff;
  font-weight: 700;
  font-size: 9px;
  line-height: 12px;
  text-align: center;
  border-right: 1px solid #c5d8e6;
}
.body .cell {
  border: solid #d3dce0;
  border-width: 0 1px 1px 0;
}
.alt .cell {
  background: #f5f0e6;
}
.note .cell {
  color: #14587a;
  font-weight: 700;
}
.more {
  position: absolute;
  right: 0;
  top: 50%;
  border: 3px solid transparent;
  border-left: 3px solid #4a0d12;
  border-right: 0;
  margin-top: -3px;
}
.vscroll {
  width: 9px;
  background: #cfcfce;
  border-top: 2px solid #3a3a38;
  padding-top: 2px;
  box-sizing: border-box;
}
.vscroll span {
  display: block;
  width: 5px;
  height: 33%;
  margin: 0 auto;
  border-radius: 3px;
  background: #7f807e;
}
.hscroll {
  display: flex;
  align-items: center;
  height: 10px;
  padding: 0 2px;
  margin-right: 9px;
  background: #cfcfce;
  flex: none;
}
.thumb {
  width: 46%;
  height: 6px;
  border-radius: 3px;
  background: #7f827e;
}
.grip {
  width: 2px;
  height: 7px;
  margin-left: auto;
  background: #4b4b49;
}

.tabs {
  display: flex;
  height: 16px;
  flex: none;
  font-size: 9px;
}
.tabnav {
  display: flex;
  gap: 1px;
  padding: 0 12px 0 6px;
  align-items: center;
}
.tabnav svg {
  width: 14px;
  height: 14px;
  fill: none;
  stroke: #cfcfcd;
}
.add {
  margin-right: 2px;
}
.add svg {
  width: 14px;
  height: 14px;
}
.tab {
  padding: 0 7px;
  line-height: 14px;
  border-bottom: 2px solid transparent;
  background: linear-gradient(#d5d4d2, #d5d4d2) right center / 1px 8px no-repeat;
}
.tab.active {
  padding: 0 7px;
  background: #fff;
  border-bottom-color: #8b8b89;
  font-weight: 700;
}

.sidebar {
  position: relative;
  width: 38px;
  display: flex;
  flex-direction: column;
  align-items: center;
  padding-top: 6px;
  box-sizing: border-box;
  gap: 13px;
  flex: none;
}
.sidebar svg {
  width: 16px;
  height: 16px;
}
.sidebar .menu {
  margin-bottom: 2px;
}
.sidebar .hide {
  position: absolute;
  left: -1px;
  top: 269px;
  width: 5px;
  height: 50px;
  background: #929290;
  display: grid;
  place-items: center;
}
.hide::after {
  content: "";
  border: 2px solid transparent;
  border-left: 3px solid #fff;
  border-right: 0;
}

.status {
  display: flex;
  align-items: center;
  height: 17px;
  border-top: 1px solid #dad9d7;
  box-sizing: border-box;
  flex: none;
  font-size: 9px;
}
.status > span {
  box-sizing: border-box;
  height: 13px;
  line-height: 13px;
  border-right: 1px solid #e2e1df;
  white-space: nowrap;
}
.status .disk {
  width: 22px;
  padding: 0 0 0 6px;
}
.disk svg {
  width: 12px;
  height: 12px;
}
.status .count {
  width: 157px;
  padding-left: 5px;
}
.status .selection {
  width: 222px;
  padding-left: 5px;
}
.status .pagestyle {
  width: 203px;
  padding-left: 6px;
}
.status .language {
  width: 169px;
  text-align: center;
}
.status .mode {
  width: 75px;
  padding-left: 51px;
}
.mode svg {
  width: 20px;
  height: 12px;
}
.status .blank {
  width: 20px;
}
.status .sums {
  flex: 1;
  text-align: center;
}
.status .zoomer {
  display: flex;
  align-items: center;
  width: 96px;
  padding-left: 5px;
  gap: 2px;
}
.zoomer svg {
  width: 8px;
  height: 8px;
}
.zoomer input {
  width: 66px;
  height: 10px;
  appearance: none;
}
.zoomer input::-webkit-slider-runnable-track {
  height: 1px;
  background: #9a9a98;
}
.zoomer input::-webkit-slider-thumb {
  appearance: none;
  width: 3px;
  height: 7px;
  margin-top: -3px;
  border: 1px solid #4b4b49;
  background: #fff;
  box-sizing: border-box;
}
.status .percent {
  width: 33px;
  padding-left: 6px;
  border: 0;
}
</style>
